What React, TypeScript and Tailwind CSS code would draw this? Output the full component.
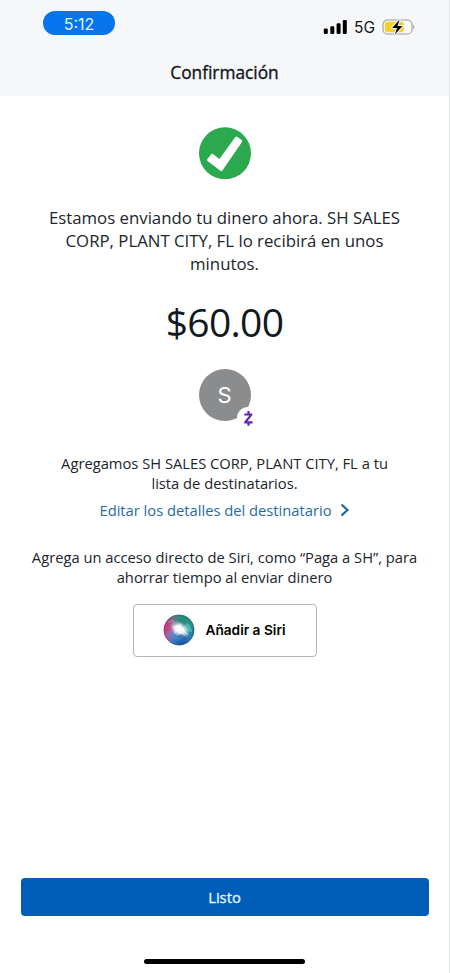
function StatusBar() {
  return (
    <div className="flex h-[46px] items-start justify-between pl-[43px] pr-[33px] pt-[11px]">
      <div className="flex h-6 w-[72px] items-center justify-center rounded-full bg-[#0874ec] pt-px font-['Inter','Liberation_Sans',sans-serif] text-[16px] text-[#e4f2ff]">
        5:12
      </div>
      <div className="flex items-center pt-[7px]">
        <svg width="24" height="16" viewBox="0 0 24 16" fill="#000">
          <rect x="0.8" y="9.5" width="4" height="5.4" rx="1.2" />
          <rect x="7.3" y="7.3" width="4" height="7.6" rx="1.2" />
          <rect x="13.6" y="4.3" width="4" height="10.6" rx="1.2" />
          <rect x="19.8" y="1" width="4" height="13.9" rx="1.2" />
        </svg>
        <span className="ml-[7px] pt-px font-['Inter','Liberation_Sans',sans-serif] text-[15.5px] leading-4 text-[#151515]">5G</span>
        <svg className="ml-[7px]" width="34" height="18" viewBox="0 0 34 18">
          <rect x="1" y="2" width="29" height="14" rx="4.5" fill="#fafbfc" stroke="#9b9b9b" strokeWidth="1.1" />
          <rect x="2.8" y="3.8" width="19" height="10.4" rx="2.6" fill="#f7cf2d" />
          <path d="M31.3 6.7Q33.3 9 31.3 11.3Z" fill="#8d8d8d" />
          <path d="M17.7 1.5 10.1 10h5l-2.3 6.5 7.8-8.6h-5.1Z" fill="#000" stroke="#f7f8fa" strokeWidth="2" paintOrder="stroke" strokeLinejoin="round" />
        </svg>
      </div>
    </div>
  );
}

function SuccessIcon() {
  return (
    <svg className="block" width="54" height="54" viewBox="0 0 54 54">
      <circle cx="27" cy="27.3" r="26" fill="#2ca84f" />
      <path d="m9.4 33 3.8-4.8q.8-.9 1.7-.2l6.5 5.1 15.8-21.9q.8-1.1 1.9-.4l4.6 3.3q1 .8.3 1.8L24.4 44.4q-.9 1.2-2.1.3L9.6 34.9q-1-.8-.2-1.9Z" fill="#fff" />
    </svg>
  );
}

function RecipientAvatar() {
  return (
    <div className="relative flex size-[52px] items-center justify-center rounded-full bg-[#8b8c8d] font-['Inter','Liberation_Sans',sans-serif] text-[22px] text-white">
      S
      <svg className="absolute left-[38px] top-[38px]" width="22" height="22" viewBox="0 0 22 22">
        <circle cx="11" cy="11" r="11" fill="#fff" />
        <path d="M7.3 7.5h8M14 8.1 8.5 14.9M7.3 15.4h8.3M11.5 4v3.5M11.5 15.4v3.4" fill="none" stroke="#6521bd" strokeWidth="2.2" />
      </svg>
    </div>
  );
}

function SiriOrb() {
  return (
    <svg width="32" height="32" viewBox="0 0 32 32">
      <defs>
        <linearGradient id="base" x1="0" y1="0.35" x2="1" y2="0.65">
          <stop offset="0" stopColor="#c52a72" />
          <stop offset="0.32" stopColor="#c9609b" />
          <stop offset="0.65" stopColor="#48a0b5" />
          <stop offset="1" stopColor="#12758a" />
        </linearGradient>
        <radialGradient id="green" cx="0.65" cy="0.08" r="0.57">
          <stop offset="0" stopColor="#159276" />
          <stop offset="0.5" stopColor="#2a8d7a" stopOpacity="0.75" />
          <stop offset="1" stopColor="#2a8d7a" stopOpacity="0" />
        </radialGradient>
        <radialGradient id="blue" cx="0.6" cy="1" r="0.55">
          <stop offset="0" stopColor="#174995" />
          <stop offset="0.55" stopColor="#2579c5" stopOpacity="0.9" />
          <stop offset="1" stopColor="#2684c8" stopOpacity="0" />
        </radialGradient>
        <radialGradient id="glow">
          <stop offset="0" stopColor="#fff" />
          <stop offset="0.4" stopColor="#fff" stopOpacity="0.9" />
          <stop offset="1" stopColor="#e8eaff" stopOpacity="0" />
        </radialGradient>
        <clipPath id="orb"><circle cx="16" cy="16" r="15.3" /></clipPath>
      </defs>
      <g clipPath="url(#orb)">
        <rect width="32" height="32" fill="url(#base)" />
        <rect width="32" height="32" fill="url(#green)" />
        <rect width="32" height="32" fill="url(#blue)" />
        <path d="M2 20q8-6 16-3l4 8q-12 3-20-5Z" fill="#4a8ddd" opacity="0.5" />
        <path d="M4 9q10-3 13 7L10 5Z" fill="#eb83b5" opacity="0.5" />
        <path d="m17 16 7-7q5 4 5 9Z" fill="#66dcd2" opacity="0.5" />
        <ellipse cx="16.5" cy="15.2" rx="11" ry="7.5" fill="url(#glow)" transform="rotate(35 16 16)" />
        <path d="M9 12q6 0 9-3l1 5 7 7-9-4-6 3q2-4-2-8Z" fill="#fff" opacity="0.5" />
        <path d="m18 20 7 4-5 2-6-4Z" fill="#315c86" opacity="0.6" />
      </g>
      <circle cx="16" cy="16" r="14.9" fill="none" stroke="#493a64" strokeOpacity="0.5" strokeWidth="0.8" />
    </svg>
  );
}

export default function App() {
  return (
    <div className="flex h-[973px] w-[450px] flex-col border-r border-[#e3e4e6] bg-white font-['Open_Sans','Noto_Sans',sans-serif] text-[#20252b]">
      <header className="h-24 shrink-0 bg-[#f5f7f9]">
        <StatusBar />
        <h1 className="h-[45px] border-b border-[#f2f4f6] pt-[15px] text-center text-[17.3px] leading-6 text-[#11161b] [-webkit-text-stroke:0.35px_#11161b]">Confirmación</h1>
      </header>
      <main className="flex flex-1 flex-col items-center pt-[30px]">
        <SuccessIcon />
        <p className="mt-[27px] whitespace-nowrap text-center text-[16.8px] leading-[22.8px]">
          Estamos enviando tu dinero ahora. SH SALES<br />CORP, PLANT CITY, FL lo recibirá en unos<br />minutos.
        </p>
        <div className="mt-[21px] text-[39px] leading-[52px] tracking-[-0.7px] text-[#11181e]">$60.00</div>
        <div className="mt-[21px]"><RecipientAvatar /></div>
        <p className="mt-[32px] whitespace-nowrap text-center text-[14.73px] leading-5">
          Agregamos SH SALES CORP, PLANT CITY, FL a tu<br />lista de destinatarios.
        </p>
        <a className="mt-[6px] flex h-[22px] items-center gap-2 whitespace-nowrap text-[14.73px] text-[#1f6ca9]">
          Editar los detalles del destinatario
          <svg width="10" height="14" viewBox="0 0 10 14" fill="none" stroke="#1763a7" strokeWidth="2.1"><path d="m1.5 1.5 6 5.5-6 5.5" /></svg>
        </a>
        <p className="mt-[26px] whitespace-nowrap text-center text-[14.73px] leading-5">
          Agrega un acceso directo de Siri, como “Paga a SH”, para<br />ahorrar tiempo al enviar dinero
        </p>
        <button className="mt-[17px] flex h-[53px] w-[184px] items-center justify-center gap-[10px] rounded-[4px] border border-[#b5b5b5] pb-px font-['Inter','Liberation_Sans',sans-serif] text-[13.7px] font-semibold text-black">
          <SiriOrb />Añadir a Siri
        </button>
      </main>
      <footer className="flex h-[95px] shrink-0 flex-col items-center">
        <button className="h-[38px] w-[408px] rounded-[4px] bg-[#005eb8] pt-px text-[14.8px] text-[#e8f5ff] [-webkit-text-stroke:0.3px_#e8f5ff]">Listo</button>
        <div className="mt-[43px] h-[5px] w-[161px] rounded-full bg-black" />
      </footer>
    </div>
  );
}
